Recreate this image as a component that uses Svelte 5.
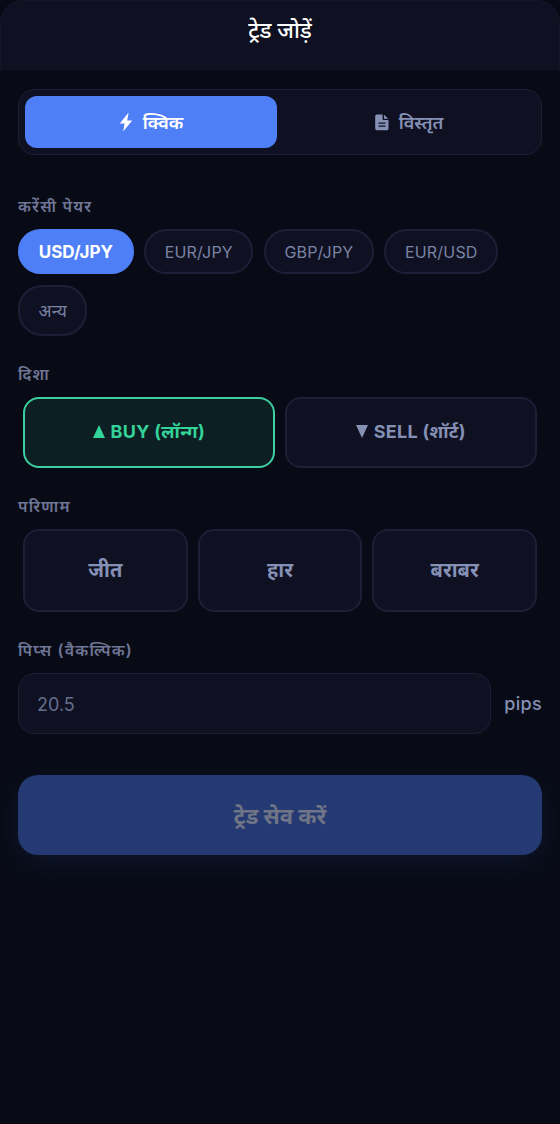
<script lang="ts">
  let mode = $state('quick')
  let pair = $state('USD/JPY')
  let direction = $state('buy')
  let result = $state('')
  let pips = $state('')

  const pairs = ['USD/JPY', 'EUR/JPY', 'GBP/JPY', 'EUR/USD', 'अन्य']
  const results = ['जीत', 'हार', 'बराबर']
</script>

<div class="page">
  <header class="top">ट्रेड जोड़ें</header>

  <main class="form">
    <div class="tabs">
      <button class="tab" class:on={mode === 'quick'} onclick={() => (mode = 'quick')}>
        <svg width="14" height="20" viewBox="0 0 14 20"><path fill="currentColor" d="M9.600.6.800 11.400h4.800L4.200 19.600l9-11H8.200z" /></svg>
        क्विक
      </button>
      <button class="tab" class:on={mode === 'detail'} onclick={() => (mode = 'detail')}>
        <svg width="14" height="17" viewBox="0 0 14 17"><path fill="currentColor" fill-rule="evenodd" d="M2 .5h5.600v4.600c0 .6.400 1 1 1h4.900v8.400c0 1-.8 1.800-1.800 1.800H2c-1 0-1.800-.8-1.800-1.800V2.300C.2 1.300 1 .5 2 .5Zm7 .2 4.300 4H9ZM3.500 8.500v1.300h7V8.500Zm0 3v1.300h7v-1.300Z" /></svg>
        विस्तृत
      </button>
    </div>

    <div class="label first">करेंसी पेयर</div>
    <div class="chips">
      {#each pairs as p}
        <button class="chip" class:on={pair === p} onclick={() => (pair = p)}>{p}</button>
      {/each}
    </div>

    <div class="label">दिशा</div>
    <div class="row dir">
      <button class="opt" class:buy={direction === 'buy'} onclick={() => (direction = 'buy')}>
        <svg width="12" height="13" viewBox="0 0 12 13"><path fill="currentColor" d="M6 0l6 13H0z" /></svg>
        BUY (लॉन्ग)
      </button>
      <button class="opt" class:sell={direction === 'sell'} onclick={() => (direction = 'sell')}>
        <svg width="12" height="13" viewBox="0 0 12 13"><path fill="currentColor" d="M0 0h12L6 13z" /></svg>
        SELL (शॉर्ट)
      </button>
    </div>

    <div class="label">परिणाम</div>
    <div class="row res">
      {#each results as r}
        <button class="opt big" class:picked={result === r} onclick={() => (result = r)}>{r}</button>
      {/each}
    </div>

    <div class="label">पिप्स (वैकल्पिक)</div>
    <div class="pips">
      <input bind:value={pips} placeholder="20.5" inputmode="decimal" />
      <span>pips</span>
    </div>

    <button class="save" disabled={!result}>ट्रेड सेव करें</button>
  </main>
</div>

<style>
  :global(body) {
    background: #080b15;
    font-family: Inter, "Noto Sans", "Noto Sans Devanagari", sans-serif;
  }
  .page {
    min-height: 1124px;
    background: #080b15;
  }
  .top {
    height: 70px;
    display: flex;
    align-items: center;
    justify-content: center;
    background: #0f1122;
    border: 1px solid #14172a;
    border-bottom-color: #12152a;
    border-radius: 24px 24px 0 0;
    color: #fff;
    font-size: 22px;
    font-weight: 500;
    padding-bottom: 12px;
    box-sizing: border-box;
  }
  .form {
    padding: 19px 18px 0;
  }
  button {
    font-family: inherit;
    cursor: pointer;
  }
  .tabs {
    display: flex;
    gap: 6px;
    height: 66px;
    box-sizing: border-box;
    padding: 6px;
    background: #0f1122;
    border: 1px solid #1c1f35;
    border-radius: 16px;
  }
  .tab {
    flex: 1;
    display: flex;
    align-items: center;
    justify-content: center;
    gap: 10px;
    border: 0;
    background: transparent;
    border-radius: 12px;
    color: #8590b5;
    font-size: 18px;
    font-weight: 600;
  }
  .tab.on {
    background: #4f7ff7;
    color: #fff;
  }
  .label {
    margin: 28px 0 13px;
    color: #6f7696;
    font-size: 16px;
    font-weight: 600;
    letter-spacing: 1.2px;
    line-height: 20px;
  }
  .label.first {
    margin-top: 41px;
  }
  .chips {
    display: flex;
    flex-wrap: wrap;
    gap: 11px 10.5px;
  }
  .chip {
    padding: 0 18.5px;
    height: 45px;
    border-radius: 24px;
    border: 2px solid #1c1f35;
    background: #0f1122;
    color: #7a83a4;
    font-size: 16px;
    letter-spacing: 0.2px;
  }
  .chip:last-child {
    height: 51px;
    font-size: 17px;
  }
  .chip.on {
    padding: 0 18.8px;
    background: #4f7ff7;
    border-color: #4f7ff7;
    color: #fff;
    font-size: 17px;
    font-weight: 700;
    letter-spacing: 0;
  }
  .row {
    display: grid;
    gap: 10px;
    padding: 0 5px;
  }
  .dir {
    grid-template-columns: 1fr 1fr;
  }
  .res {
    grid-template-columns: 1fr 1fr 1fr;
  }
  .opt {
    height: 71px;
    padding-bottom: 4px;
    border-radius: 16px;
    border: 2px solid #1c1f35;
    background: #0f1122;
    color: #8590b5;
    font-size: 18px;
    font-weight: 700;
    letter-spacing: 0.3px;
  }
  .opt svg {
    margin-right: 1px;
  }
  .opt.buy {
    border-color: #3dcfa0;
    background: #0d1f22;
    color: #34d399;
  }
  .opt.sell {
    border-color: #f87171;
    color: #f87171;
  }
  .opt.big {
    height: 83px;
    font-size: 20px;
    letter-spacing: 0;
  }
  .opt.picked {
    border-color: #4f7ff7;
    color: #fff;
  }
  .pips {
    display: flex;
    align-items: center;
    gap: 13px;
  }
  .pips input {
    flex: 1;
    min-width: 0;
    height: 61px;
    box-sizing: border-box;
    padding: 2px 18px 0;
    border: 1px solid #1c1f35;
    border-radius: 16px;
    background: #0f1122;
    color: #fff;
    font-family: inherit;
    font-size: 18px;
    outline: none;
  }
  .pips input::placeholder {
    color: #666e8d;
  }
  .pips span {
    color: #8590b5;
    font-size: 18px;
    font-weight: 500;
    letter-spacing: 0.3px;
  }
  .save {
    display: block;
    width: 100%;
    height: 80px;
    margin-top: 41px;
    padding-bottom: 2px;
    border: 0;
    border-radius: 20px;
    background: #253a72;
    color: #6f7486;
    font-size: 22px;
    font-weight: 700;
    box-shadow: 0 8px 32px rgba(79, 127, 247, 0.1);
  }
</style>
